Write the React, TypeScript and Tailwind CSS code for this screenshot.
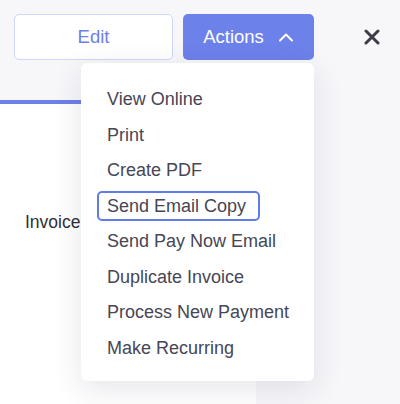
import { useState } from 'react';

const items = [
  'View Online',
  'Print',
  'Create PDF',
  'Send Email Copy',
  'Send Pay Now Email',
  'Duplicate Invoice',
  'Process New Payment',
  'Make Recurring',
];

export default function App() {
  const [focused] = useState('Send Email Copy');

  return (
    <div className="relative w-[400px] h-[404px] overflow-hidden bg-[#f7f7fa] font-['Liberation_Sans',Arial,sans-serif]">
      <div className="flex items-center px-[14px] pt-[14px]">
        <button className="w-[159px] h-[46px] rounded-[5px] border border-[#cfd5fb] bg-white text-[18.5px] text-[#6c7fe8]">
          Edit
        </button>
        <button className="ml-[10px] w-[131px] h-[46px] rounded-[5px] bg-[#6d81ea] text-white text-[18.5px] flex items-center justify-center gap-[14px]">
          Actions
          <svg width="16" height="10" viewBox="0 0 16 10" fill="none">
            <path d="M2 8.5 L8 2.5 L14 8.5" stroke="white" strokeWidth="2" strokeLinecap="round" strokeLinejoin="round" />
          </svg>
        </button>
        <button className="ml-[49px] w-[18px] h-[18px] flex items-center justify-center">
          <svg width="16" height="16" viewBox="0 0 16 16" fill="none">
            <path d="M2 2 L14 14 M14 2 L2 14" stroke="#3d3d49" strokeWidth="3" strokeLinecap="round" />
          </svg>
        </button>
      </div>

      <div className="mt-[40px] w-[256px] h-[330px] flex flex-col">
        <div className="h-[4px] bg-[#6d81ea]" />
        <div className="flex-1 bg-white pl-[25px] pt-[105px]">
          <div className="text-[17.5px] text-[#2f2f38]">Invoice</div>
        </div>
      </div>

      <div className="absolute left-[81px] top-[63px] w-[233px] h-[318px] rounded-[6px] bg-white shadow-[0_8px_30px_rgba(40,40,80,0.12)] pt-[19px] pl-[16px]">
        {items.map((item) => (
          <div key={item} className="h-[35.5px] flex items-center">
            <span
              className={
                item === focused
                  ? 'inline-flex items-center h-[30px] pl-[8px] pr-[12px] rounded-[5px] border-2 border-[#5f7ce9] text-[18px] text-[#464655]'
                  : 'inline-flex items-center h-[30px] px-[10px] text-[18px] text-[#464655]'
              }
            >
              {item}
            </span>
          </div>
        ))}
      </div>
    </div>
  );
}
